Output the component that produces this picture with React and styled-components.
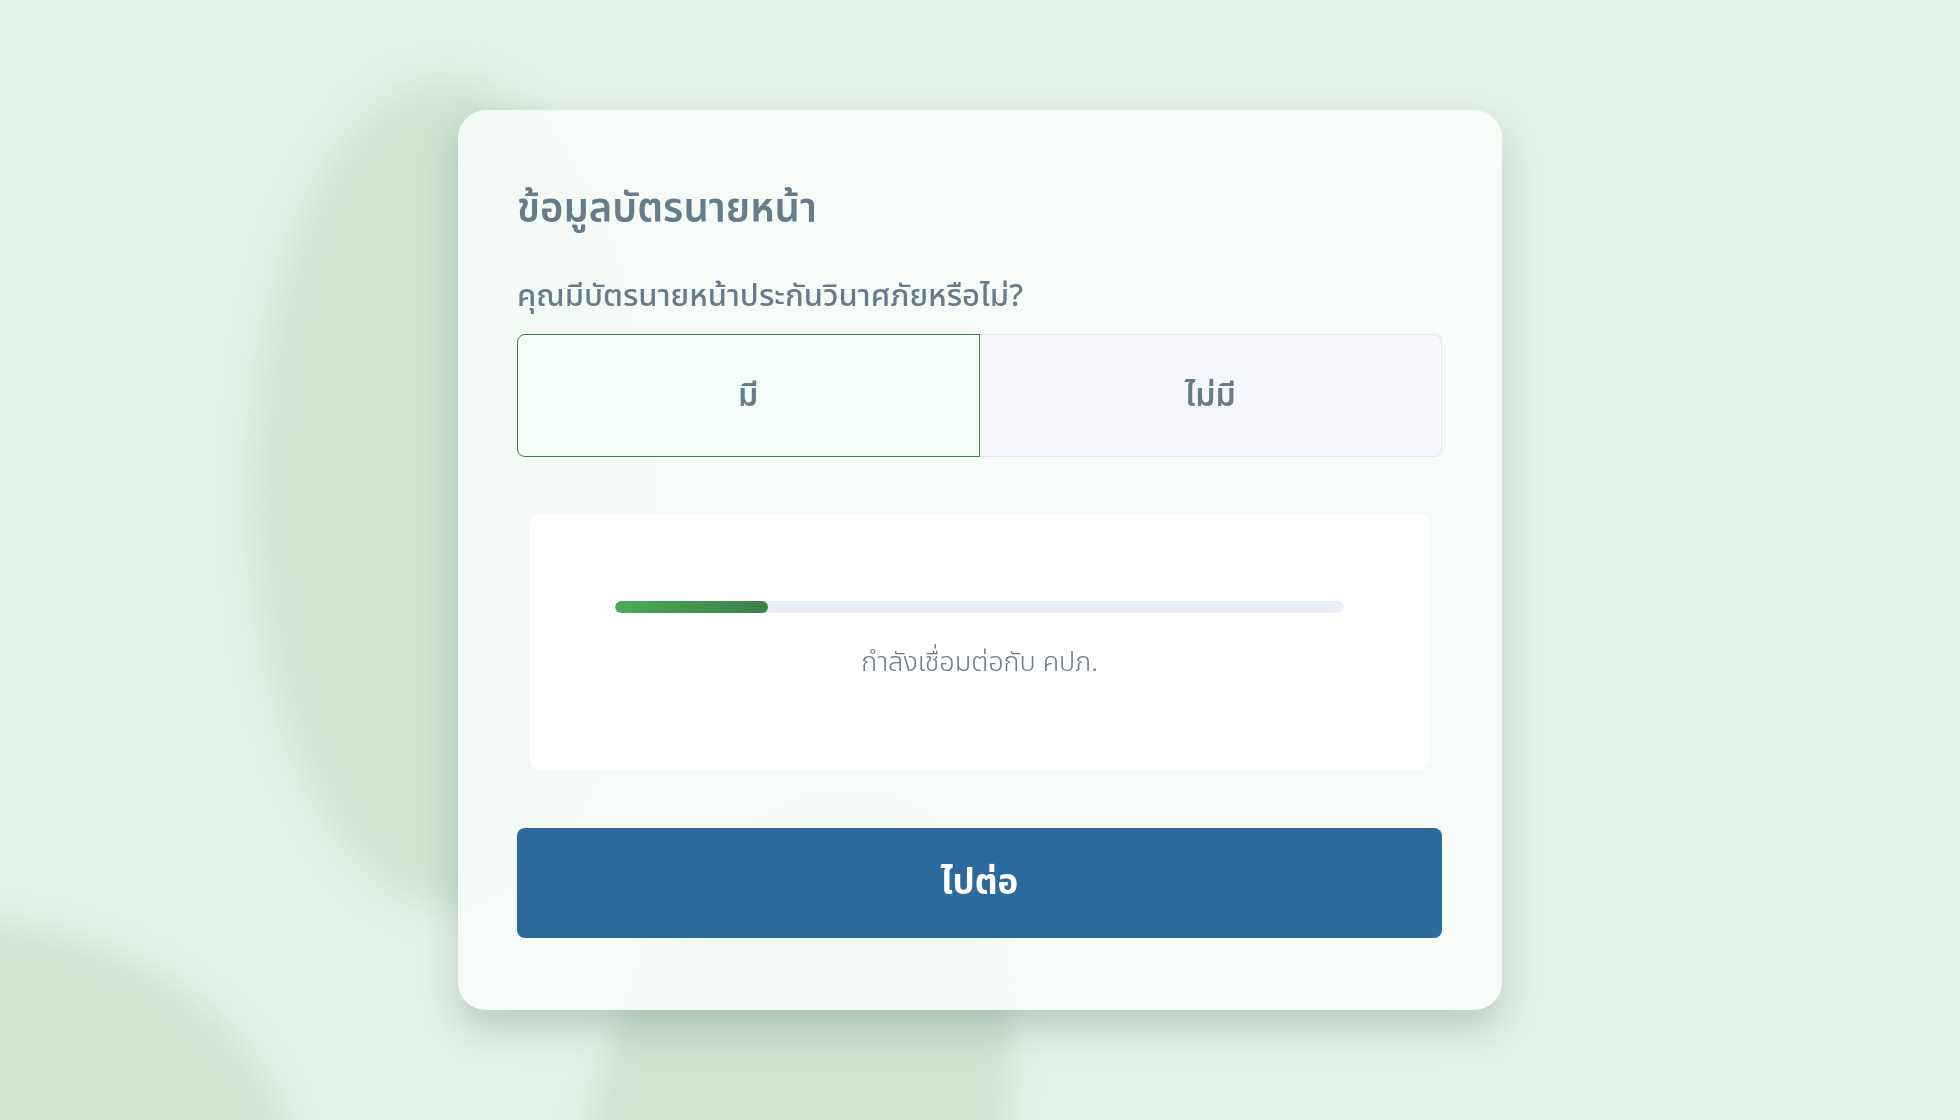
import React, { useState } from 'react';
import styled, { createGlobalStyle } from 'styled-components';

const GlobalStyle = createGlobalStyle`
  * { box-sizing: border-box; }
  html, body { margin: 0; padding: 0; }
  body {
    background: #e4f2e7;
    font-family: 'Noto Sans Thai', 'Noto Sans', 'DejaVu Sans', sans-serif;
    color: #667c8a;
  }
`;

const Page = styled.div`
  position: relative;
  min-height: 100vh;
  display: flex;
  align-items: center;
  justify-content: center;
  overflow: hidden;
`;

// blurred leaf shapes behind the card
const Blob = styled.div`
  position: absolute;
  background: #cde4d1;
  border-radius: 50%;
  filter: blur(${p => p.$blur || 18}px);
  z-index: 0;
`;

const Card = styled.div`
  position: relative;
  z-index: 1;
  width: 1044px;
  height: 900px;
  padding: 60px 60px 72px 59px;
  border-radius: 28px;
  background: rgba(250, 253, 251, 0.84);
  backdrop-filter: blur(30px);
  box-shadow: 0 18px 36px rgba(40, 70, 70, 0.22);
  display: flex;
  flex-direction: column;
`;

const Title = styled.h1`
  margin: 12px 0 38px;
  font-size: 40px;
  font-weight: 600;
  line-height: 56px;
  color: #667c8a;
`;

const Question = styled.div`
  font-size: 31px;
  font-weight: 500;
  line-height: 42px;
  margin-bottom: 16px;
  color: #667c8a;
`;

const Toggle = styled.div`
  display: grid;
  grid-template-columns: 1fr 1fr;
  height: 123px;
`;

const Option = styled.button`
  font-family: inherit;
  font-size: 32px;
  font-weight: 600;
  color: #667c8a;
  cursor: pointer;
  border: 1px solid ${p => (p.$active ? '#3d7d48' : '#e1e5ee')};
  background: ${p => (p.$active ? '#f3fcf6' : '#f6f7fc')};
  border-radius: ${p => (p.$side === 'left' ? '8px 0 0 8px' : '0 8px 8px 0')};
  ${p => (p.$side === 'right' ? 'border-left: none;' : '')}
`;

const StatusBox = styled.div`
  margin: 57px 12px 0;
  height: 256px;
  background: #ffffff;
  border-radius: 12px;
  padding: 87px 86px 0;
  display: flex;
  flex-direction: column;
  align-items: center;
`;

const Track = styled.div`
  width: 100%;
  height: 12px;
  border-radius: 6px;
  background: #e9eef5;
  overflow: hidden;
`;

const Fill = styled.div`
  height: 100%;
  border-radius: 6px;
  background: linear-gradient(90deg, #4caa58 0%, #3b7f47 100%);
`;

const StatusText = styled.div`
  margin-top: 30px;
  font-size: 27px;
  font-weight: 300;
  line-height: 40px;
  color: #667c8a;
`;

const NextButton = styled.button`
  margin-top: 58px;
  height: 110px;
  width: 100%;
  border: none;
  border-radius: 8px;
  background: #2c699c;
  color: #ffffff;
  font-family: inherit;
  font-size: 35px;
  font-weight: 700;
  cursor: pointer;
`;

export default function App() {
  const [hasCard, setHasCard] = useState(true);
  const progress = 21;

  return (
    <>
      <GlobalStyle />
      <Page>
        <Blob style={{ left: 254, top: 80, width: 386, height: 826 }} $blur={16} />
        <Blob style={{ left: -400, top: 920, width: 700, height: 560 }} $blur={14} />
        <Blob style={{ left: 590, top: 790, width: 410, height: 700, transform: 'rotate(14deg)' }} $blur={14} />
        <Card>
          <Title>ข้อมูลบัตรนายหน้า</Title>
          <Question>คุณมีบัตรนายหน้าประกันวินาศภัยหรือไม่?</Question>
          <Toggle>
            <Option $side="left" $active={hasCard} onClick={() => setHasCard(true)}>มี</Option>
            <Option $side="right" $active={!hasCard} onClick={() => setHasCard(false)}>ไม่มี</Option>
          </Toggle>
          <StatusBox>
            <Track>
              <Fill style={{ width: `${progress}%` }} />
            </Track>
            <StatusText>กำลังเชื่อมต่อกับ คปภ.</StatusText>
          </StatusBox>
          <NextButton>ไปต่อ</NextButton>
        </Card>
      </Page>
    </>
  );
}
